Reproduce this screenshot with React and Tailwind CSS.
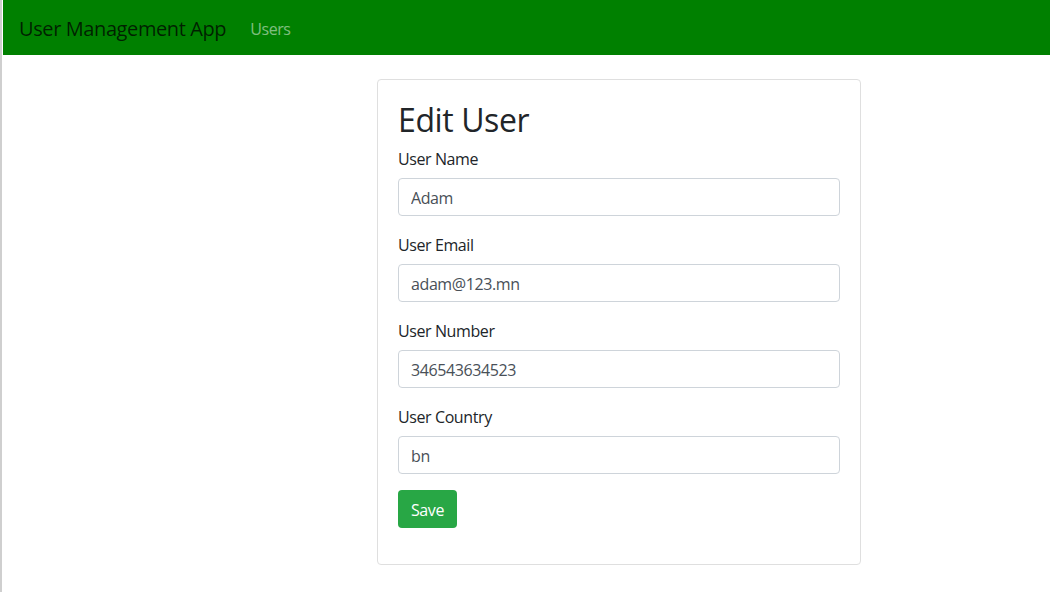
import React, { useState } from "react";

const fields = [
  { label: "User Name", value: "Adam" },
  { label: "User Email", value: "adam@123.mn" },
  { label: "User Number", value: "346543634523" },
  { label: "User Country", value: "bn" },
];

export default function App() {
  const [values, setValues] = useState(fields.map((f) => f.value));

  return (
    <div
      className="min-h-[592px] bg-white border-l-2 border-[#cfcfcf] pl-px text-[#212529] tracking-[-0.025em]"
      style={{ fontFamily: '"Open Sans", "Noto Sans", sans-serif' }}
    >
      {/* Navbar */}
      <nav className="h-[55px] bg-[#008000] flex items-center px-4 pt-0.5">
        <span className="text-[20px] text-black/75 mr-4 leading-[30px]">User Management App</span>
        <a className="px-2 text-[16px] text-white/50 leading-6">Users</a>
      </nav>

      {/* Edit form card */}
      <div className="pt-6 pl-[374px]">
        <div className="w-[484px] border border-[#dfdfdf] rounded p-5">
          <h1 className="text-[32px] leading-[36px] font-normal pt-0.5 mb-2">Edit User</h1>
          <form className="mb-4" onSubmit={(e) => e.preventDefault()}>
            {fields.map((f, i) => (
              <div key={f.label} className="mb-4">
                <label className="block text-[16px] leading-6 pt-px mb-[7px]">{f.label}</label>
                <input
                  value={values[i]}
                  onChange={(e) => {
                    const next = [...values];
                    next[i] = e.target.value;
                    setValues(next);
                  }}
                  className="block w-full h-[38px] px-3 pt-0.5 border border-[#ced4da] rounded text-[16px] text-[#495057] outline-none"
                />
              </div>
            ))}
            <button
              type="submit"
              className="h-[38px] px-[13px] pt-0.5 rounded bg-[#28a745] text-white text-[16px] leading-6"
            >
              Save
            </button>
          </form>
        </div>
      </div>
    </div>
  );
}
